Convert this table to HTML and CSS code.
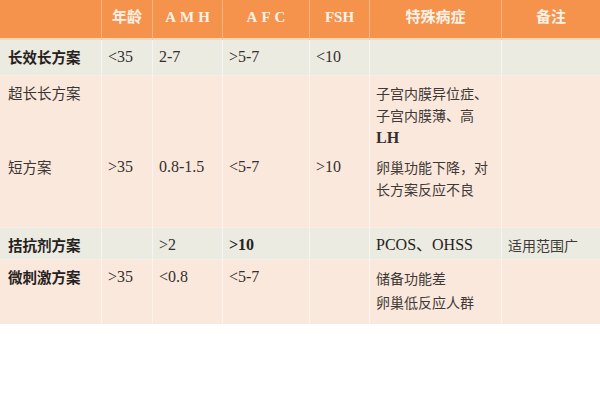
FILE: index.html
```html
<!DOCTYPE html>
<html lang="zh">
<head>
<meta charset="utf-8">
<link rel="stylesheet" href="styles.css">
</head>
<body>
<table class="plan">
  <colgroup>
    <col class="c1"><col class="c2"><col class="c3"><col class="c4"><col class="c5"><col class="c6"><col class="c7">
  </colgroup>
  <thead>
    <tr class="head">
      <th></th>
      <th>年龄</th>
      <th class="spaced">AMH</th>
      <th class="spaced">AFC</th>
      <th>FSH</th>
      <th>特殊病症</th>
      <th>备注</th>
    </tr>
  </thead>
  <tbody>
    <tr class="grey r1">
      <td class="name bold">长效长方案</td>
      <td>&lt;35</td>
      <td>2-7</td>
      <td>&gt;5-7</td>
      <td>&lt;10</td>
      <td></td>
      <td></td>
    </tr>
    <tr class="pink r2">
      <td class="name">超长长方案</td>
      <td></td>
      <td></td>
      <td></td>
      <td></td>
      <td class="cjk">子宫内膜异位症、<br>子宫内膜薄、高<br><span class="lat">LH</span></td>
      <td></td>
    </tr>
    <tr class="pink r3">
      <td class="name">短方案</td>
      <td>&gt;35</td>
      <td>0.8-1.5</td>
      <td>&lt;5-7</td>
      <td>&gt;10</td>
      <td class="cjk">卵巢功能下降，对<br>长方案反应不良</td>
      <td></td>
    </tr>
    <tr class="grey r4">
      <td class="name bold">拮抗剂方案</td>
      <td></td>
      <td>&gt;2</td>
      <td class="bold">&gt;10</td>
      <td></td>
      <td class="pcos">PCOS、OHSS</td>
      <td class="cjk">适用范围广</td>
    </tr>
    <tr class="pink r5">
      <td class="name bold">微刺激方案</td>
      <td>&gt;35</td>
      <td>&lt;0.8</td>
      <td>&lt;5-7</td>
      <td></td>
      <td class="cjk tall">储备功能差<br>卵巢低反应人群</td>
      <td></td>
    </tr>
  </tbody>
</table>
</body>
</html>
```

FILE: styles.css
```css
html, body {
  margin: 0;
  padding: 0;
  background: #ffffff;
}

.plan {
  width: 600px;
  table-layout: fixed;
  border-collapse: separate;
  border-spacing: 0;
  font-family: "Liberation Serif", "Noto Sans CJK SC", serif;
  font-size: 16px;
  color: #33302d;
}

.c1 { width: 102px; }
.c2 { width: 51px; }
.c3 { width: 70px; }
.c4 { width: 87px; }
.c5 { width: 60px; }
.c6 { width: 132px; }
.c7 { width: 98px; }

.head { height: 40px; }
.head th {
  background: #f5934d;
  color: #fdf1e6;
  font-weight: bold;
  font-size: 15px;
  line-height: 22px;
  padding: 6px 0 0 0;
  vertical-align: top;
  text-align: center;
  border-right: 1px solid #f8b583;
  border-bottom: 2px solid #f6d6bd;
  box-sizing: border-box;
}
.head th:last-child { border-right: none; }
.head th.spaced { letter-spacing: 4px; text-indent: 4px; }

td {
  vertical-align: top;
  padding: 6px 0 0 6px;
  line-height: 22px;
  border-right: 1px solid rgba(255, 255, 255, 0.5);
  box-sizing: border-box;
  white-space: nowrap;
}
td:last-child { border-right: none; }

td.name {
  padding-left: 8px;
  font-family: "Noto Sans CJK SC", sans-serif;
  font-size: 14.5px;
  color: #3a3532;
}
td.bold { font-weight: bold; color: #262220; }

td.cjk {
  font-family: "Noto Sans CJK SC", sans-serif;
  font-size: 14px;
  color: #3e3936;
}
td.cjk .lat {
  font-family: "Liberation Serif", serif;
  font-size: 16px;
  font-weight: bold;
  color: #33302d;
}
td.tall { line-height: 24px; }

td.pcos {
  font-family: "Liberation Serif", "Noto Sans CJK SC", serif;
  font-size: 16px;
  color: #262220;
}

.grey td { background: #ecebe2; }
.pink td { background: #fbe8dd; }

.r1 { height: 36px; }
.r2 { height: 74px; }
.r3 { height: 78px; }
.r4 { height: 32px; }
.r5 { height: 64px; }

.r1 td, .r3 td, .r4 td { border-bottom: 1px solid #f6efe8; }
```
